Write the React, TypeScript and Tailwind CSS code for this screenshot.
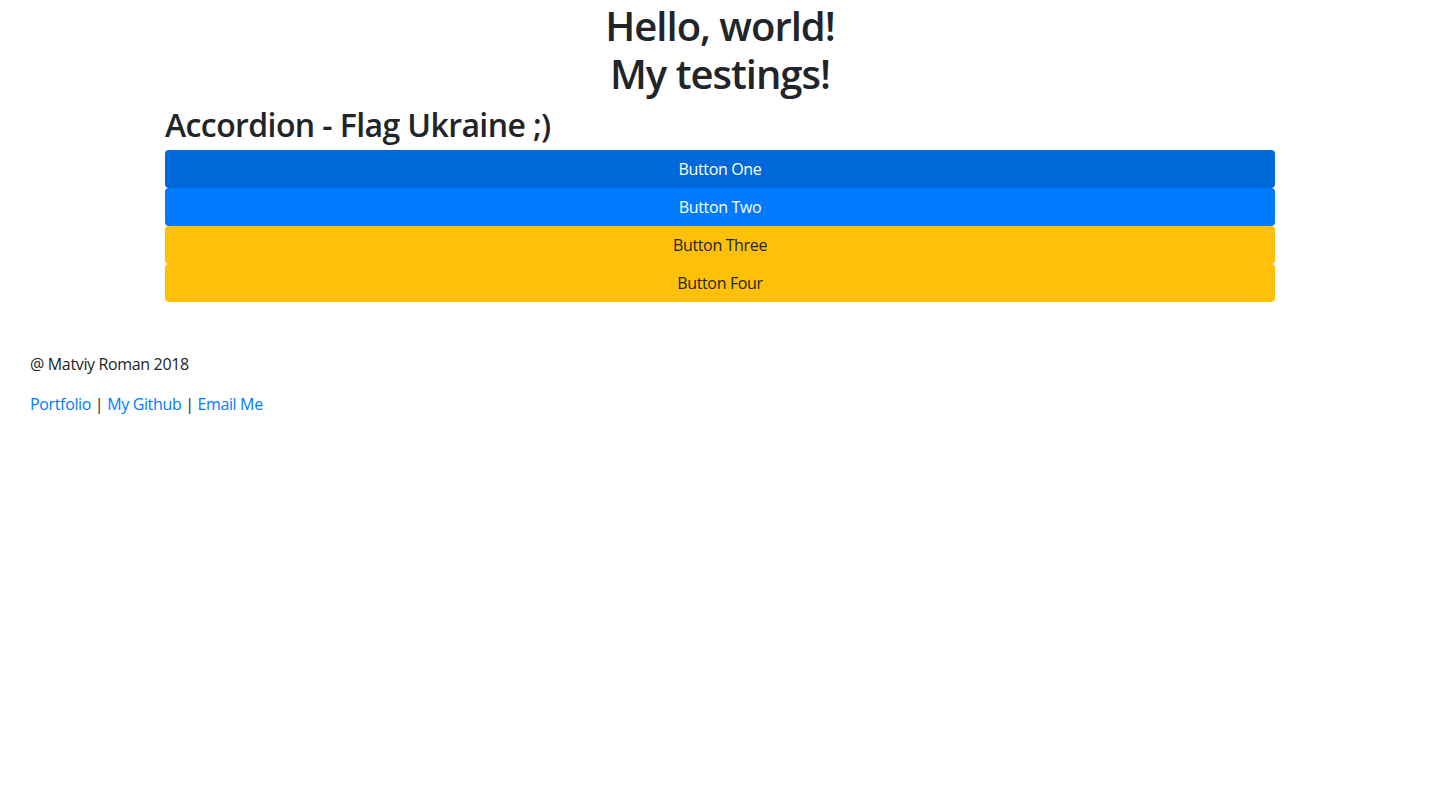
import React from 'react';

const BUTTONS = [
  { label: 'Button One', className: 'bg-[#0069d9] text-white' },
  { label: 'Button Two', className: 'bg-[#007bff] text-white' },
  { label: 'Button Three', className: 'bg-[#ffc107] text-[#212529]' },
  { label: 'Button Four', className: 'bg-[#ffc107] text-[#212529]' },
];

export default function App() {
  return (
    <div className="min-h-screen bg-white text-[#212529] font-['Open_Sans',sans-serif] text-base leading-6 tracking-[-0.35px]">
      <div className="mx-auto w-[1140px] px-[15px]">
        <h1 className="text-center text-[40px] leading-[48px] font-semibold tracking-[-1px] pt-[2px] mb-[6px]">
          Hello, world!
          <br />
          My testings!
        </h1>
        <h2 className="text-[32px] leading-[38px] font-semibold tracking-[-0.6px] pt-[2px] mb-[6px]">
          Accordion - Flag Ukraine ;)
        </h2>
        <div className="flex flex-col">
          {BUTTONS.map((b) => (
            <button
              key={b.label}
              className={`w-full h-[38px] rounded px-3 text-base ${b.className}`}
            >
              {b.label}
            </button>
          ))}
        </div>
      </div>
      <footer className="px-[30px] pt-[50px]">
        <p className="mb-4">@ Matviy Roman 2018</p>
        <p>
          <a href="#" className="text-[#007bff]">Portfolio</a> |{' '}
          <a href="#" className="text-[#007bff]">My Github</a> |{' '}
          <a href="#" className="text-[#007bff]">Email Me</a>
        </p>
      </footer>
    </div>
  );
}
